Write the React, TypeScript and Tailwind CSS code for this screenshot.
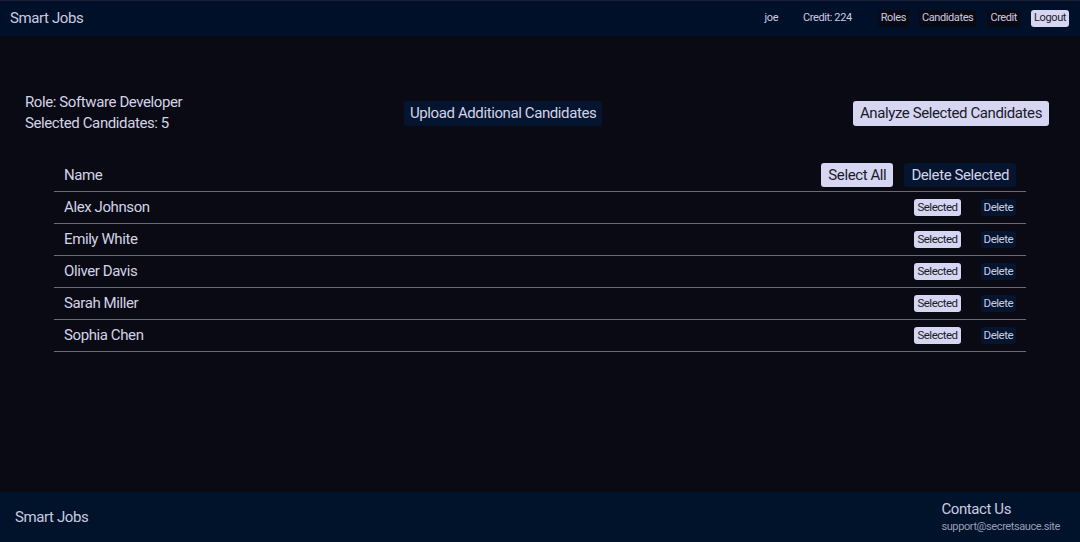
import React from "react";

const candidates = ["Alex Johnson", "Emily White", "Oliver Davis", "Sarah Miller", "Sophia Chen"];

export default function App() {
  return (
    <div
      className="flex flex-col h-[542px] bg-[#0a0a14] text-[#d3d3e6] tracking-[-0.4px]"
      style={{ fontFamily: "Roboto, 'Liberation Sans', sans-serif" }}
    >
      <header className="h-[36px] shrink-0 bg-[#011029] border-t border-[#1a1f33] flex items-center justify-between pl-[10px] pr-[11px]">
        <div className="text-[15px] text-[#c9cbe0]">Smart Jobs</div>
        <div className="flex items-center text-[11px]">
          <span className="mr-[25px] text-[#c9cbe0]">joe</span>
          <span className="mr-[26px] text-[#c9cbe0]">Credit: 224</span>
          <button className="px-[3px] h-[17px] rounded-[3px] bg-[#0a0a14] text-[#c9cbe0] mr-[10px]">Roles</button>
          <button className="px-[3px] h-[17px] rounded-[3px] bg-[#0a0a14] text-[#c9cbe0] mr-[11px]">Candidates</button>
          <button className="px-[3px] h-[17px] rounded-[3px] bg-[#0a0a14] text-[#c9cbe0] mr-[11px]">Credit</button>
          <button className="px-[3px] h-[17px] rounded-[3px] bg-[#d6d6f2] text-[#1a1a2a]">Logout</button>
        </div>
      </header>

      <main className="flex-1">
        <div className="flex items-center pt-[56px] pl-[25px] pr-[31px]">
          <div className="w-[379px] text-[15px] leading-[21px] text-[#d3d3e6]">
            <div>Role: Software Developer</div>
            <div>Selected Candidates: 5</div>
          </div>
          <button className="h-[25px] px-[6px] rounded-[3px] bg-[#051530] text-[15px] text-[#d3d3e6]">
            Upload Additional Candidates
          </button>
          <button className="ml-auto h-[25px] px-[7px] rounded-[3px] bg-[#d6d6f2] text-[15px] text-[#1a1a2a]">
            Analyze Selected Candidates
          </button>
        </div>

        <div className="mx-[54px] mt-[25px] w-[972px]">
          <div className="flex items-center justify-between h-[33px] px-[10px] border-b border-[#6a6a78]">
            <span className="text-[15px]">Name</span>
            <div className="flex items-center gap-[11px]">
              <button className="h-[24px] px-[7px] rounded-[3px] bg-[#d6d6f2] text-[15px] text-[#1a1a2a]">Select All</button>
              <button className="h-[24px] px-[7px] rounded-[3px] bg-[#051530] text-[15px] text-[#d3d3e6]">Delete Selected</button>
            </div>
          </div>
          {candidates.map((c) => (
            <div key={c} className="flex items-center justify-between h-[32px] pl-[10px] pr-[10px] border-b border-[#6a6a78]">
              <span className="text-[15px]">{c}</span>
              <div className="flex items-center gap-[20px]">
                <button className="h-[17px] px-[3px] rounded-[3px] bg-[#d6d6f2] text-[11.5px] tracking-[-0.5px] text-[#1a1a2a]">Selected</button>
                <button className="h-[17px] px-[3px] rounded-[3px] bg-[#051530] text-[11.5px] tracking-[-0.5px] text-[#c9cbe0]">Delete</button>
              </div>
            </div>
          ))}
        </div>
      </main>

      <footer className="h-[50px] shrink-0 bg-[#01122b] flex items-center justify-between pl-[15px] pr-[20px]">
        <div className="text-[15px] text-[#c9cbe0]">Smart Jobs</div>
        <div className="flex flex-col">
          <span className="text-[15px] text-[#c9cbe0] leading-[20px]">Contact Us</span>
          <span className="text-[11px] text-[#9a9cb4] leading-[16px]">support@secretsauce.site</span>
        </div>
      </footer>
    </div>
  );
}
